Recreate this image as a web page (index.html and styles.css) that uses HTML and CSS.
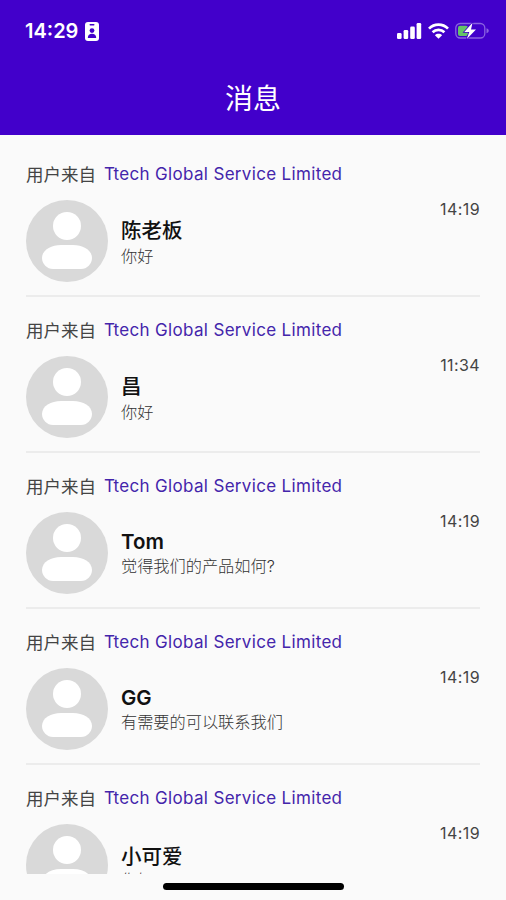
FILE: index.html
```
<!DOCTYPE html>
<html lang="zh-CN">
<head>
  <meta charset="UTF-8">
  <meta name="viewport" content="width=device-width, initial-scale=1.0">
  <title>消息</title>
  <link rel="stylesheet" href="styles.css">
</head>
<body>
  <svg class="defs" width="0" height="0">
    <symbol id="avatar" viewBox="0 0 82 82">
      <circle cx="41" cy="41" r="41" fill="#d9d9d9"/>
      <circle cx="41" cy="26" r="14" fill="#fff"/>
      <path d="M16 58c0-8 9-13 19-13h12c10 0 19 5 19 13 0 6-5 11-11 11H27c-6 0-11-5-11-11z" fill="#fff"/>
    </symbol>
  </svg>

  <header>
    <div class="status-bar">
      <div class="status-left">
        <span class="clock">14:29</span>
        <svg width="14" height="19" viewBox="0 0 14 19">
          <rect width="14" height="19" rx="3" fill="#fff"/>
          <rect x="4.5" y="2" width="5" height="1.4" rx=".7" fill="#4200cb"/>
          <circle cx="7" cy="8.6" r="2.4" fill="#4200cb"/>
          <path d="M2.8 16c0-3 1.8-4.3 4.2-4.3s4.2 1.3 4.2 4.3z" fill="#4200cb"/>
        </svg>
      </div>
      <div class="status-right">
        <svg width="25" height="16" viewBox="0 0 25 16" fill="#fff">
          <rect x="0" y="10" width="4.6" height="6" rx="1.3"/>
          <rect x="6.6" y="7" width="4.6" height="9" rx="1.3"/>
          <rect x="13.2" y="3.6" width="4.6" height="12.4" rx="1.3"/>
          <rect x="19.6" y="0" width="4.6" height="16" rx="1.3"/>
        </svg>
        <svg class="wifi" width="21" height="16" viewBox="0 0 21 16" fill="none" stroke="#fff" stroke-width="2.7">
          <path d="M1 5.6C6.2.3 14.8.3 20 5.6"/>
          <path d="M4.6 9.3c3.2-3.2 8.6-3.2 11.8 0"/>
          <path d="M10.5 15.8L6.9 12.2c2-1.9 5.2-1.9 7.2 0z" fill="#fff" stroke="none"/>
        </svg>
        <svg class="battery" width="34" height="18" viewBox="0 0 34 18">
          <rect x=".8" y="1.5" width="29" height="14.5" rx="4.5" fill="none" stroke="#8a62e0" stroke-width="1.3"/>
          <path d="M31.5 6.3c3 .8 3 4.2 0 5z" fill="#8a62e0"/>
          <rect x="3" y="3.7" width="10" height="10.2" rx="2" fill="#65c466"/>
          <path d="M17.5.8L9.3 9.9h5L11.8 17 21 7.600h-5z" fill="#fff" stroke="#4200cb" stroke-width="1.6" paint-order="stroke"/>
        </svg>
      </div>
    </div>
    <h1>消息</h1>
  </header>

  <main>
    <article class="item">
      <div class="from"><span>用户来自</span> <a>Ttech Global Service Limited</a></div>
      <div class="row">
        <svg class="avatar"><use href="#avatar"/></svg>
        <div class="info">
          <div class="name">陈老板</div>
          <div class="msg">你好</div>
        </div>
        <time>14:19</time>
      </div>
    </article>

    <article class="item">
      <div class="from"><span>用户来自</span> <a>Ttech Global Service Limited</a></div>
      <div class="row">
        <svg class="avatar"><use href="#avatar"/></svg>
        <div class="info">
          <div class="name">昌</div>
          <div class="msg">你好</div>
        </div>
        <time>11:34</time>
      </div>
    </article>

    <article class="item">
      <div class="from"><span>用户来自</span> <a>Ttech Global Service Limited</a></div>
      <div class="row">
        <svg class="avatar"><use href="#avatar"/></svg>
        <div class="info latin">
          <div class="name">Tom</div>
          <div class="msg">觉得我们的产品如何?</div>
        </div>
        <time>14:19</time>
      </div>
    </article>

    <article class="item">
      <div class="from"><span>用户来自</span> <a>Ttech Global Service Limited</a></div>
      <div class="row">
        <svg class="avatar"><use href="#avatar"/></svg>
        <div class="info latin">
          <div class="name">GG</div>
          <div class="msg">有需要的可以联系我们</div>
        </div>
        <time>14:19</time>
      </div>
    </article>

    <article class="item">
      <div class="from"><span>用户来自</span> <a>Ttech Global Service Limited</a></div>
      <div class="row">
        <svg class="avatar"><use href="#avatar"/></svg>
        <div class="info last">
          <div class="name">小可爱</div>
          <div class="msg">你好</div>
        </div>
        <time>14:19</time>
      </div>
    </article>
  </main>

  <div class="home-bar"></div>
</body>
</html>
```
FILE: styles.css
```
:root {
  --primary: #4200cb;
  --bg: #fafafa;
}

* {
  box-sizing: border-box;
}

body {
  display: flex;
  flex-direction: column;
  height: 900px;
  margin: 0;
  overflow: hidden;
  background: var(--bg);
  color: #111;
  font-family: Inter, "Noto Sans CJK SC", sans-serif;
}

.defs {
  display: block;
  flex: none;
}

header {
  flex: none;
  height: 135px;
  background: var(--primary);
  color: #fff;
}

.status-bar {
  display: flex;
  justify-content: space-between;
  align-items: center;
  height: 62px;
  padding: 0 17px 0 25px;
}

.status-left,
.status-right {
  display: flex;
  align-items: center;
}

.clock {
  width: 60px;
  font-size: 20px;
  font-weight: 600;
}

.wifi {
  margin-left: 6px;
}

.battery {
  margin-left: 6px;
}

h1 {
  margin: 16px 0 0;
  font-size: 28px;
  line-height: 42px;
  font-weight: 400;
  text-align: center;
}

main {
  flex: none;
  height: 739px;
  padding: 6px 26px 0;
  overflow: hidden;
}

.item {
  height: 156px;
  padding-top: 19px;
  border-bottom: 2px solid #ececec;
}

.from {
  display: flex;
  align-items: center;
  height: 28px;
  font-size: 17.5px;
  line-height: 28px;
  color: #444;
}

.from span {
  padding-top: 2px;
}

.from a {
  margin-left: 8px;
  font-size: 17px;
  letter-spacing: 0.33px;
  color: #4425ab;
}

.row {
  display: flex;
  align-items: flex-start;
  margin-top: 12px;
}

.avatar {
  flex: none;
  width: 82px;
  height: 82px;
}

.info {
  flex: 1;
  margin-left: 13px;
  padding-top: 17px;
}

.info.latin {
  padding-top: 16px;
}

.info.last {
  padding-top: 19px;
}

.name {
  height: 27px;
  font-size: 20.5px;
  line-height: 27px;
  font-weight: 500;
}

.latin .name {
  height: 26px;
  font-weight: 600;
}

.last .name {
  height: 25px;
}

.msg {
  height: 24px;
  font-size: 16.2px;
  line-height: 24px;
  font-weight: 300;
  color: #333;
}

time {
  margin-top: -1px;
  font-size: 16px;
  line-height: 20px;
  letter-spacing: 0.4px;
  color: #444;
}

.home-bar {
  flex: none;
  width: 181px;
  height: 7px;
  margin: 9px auto 0 163px;
  border-radius: 4px;
  background: #000;
}
```
